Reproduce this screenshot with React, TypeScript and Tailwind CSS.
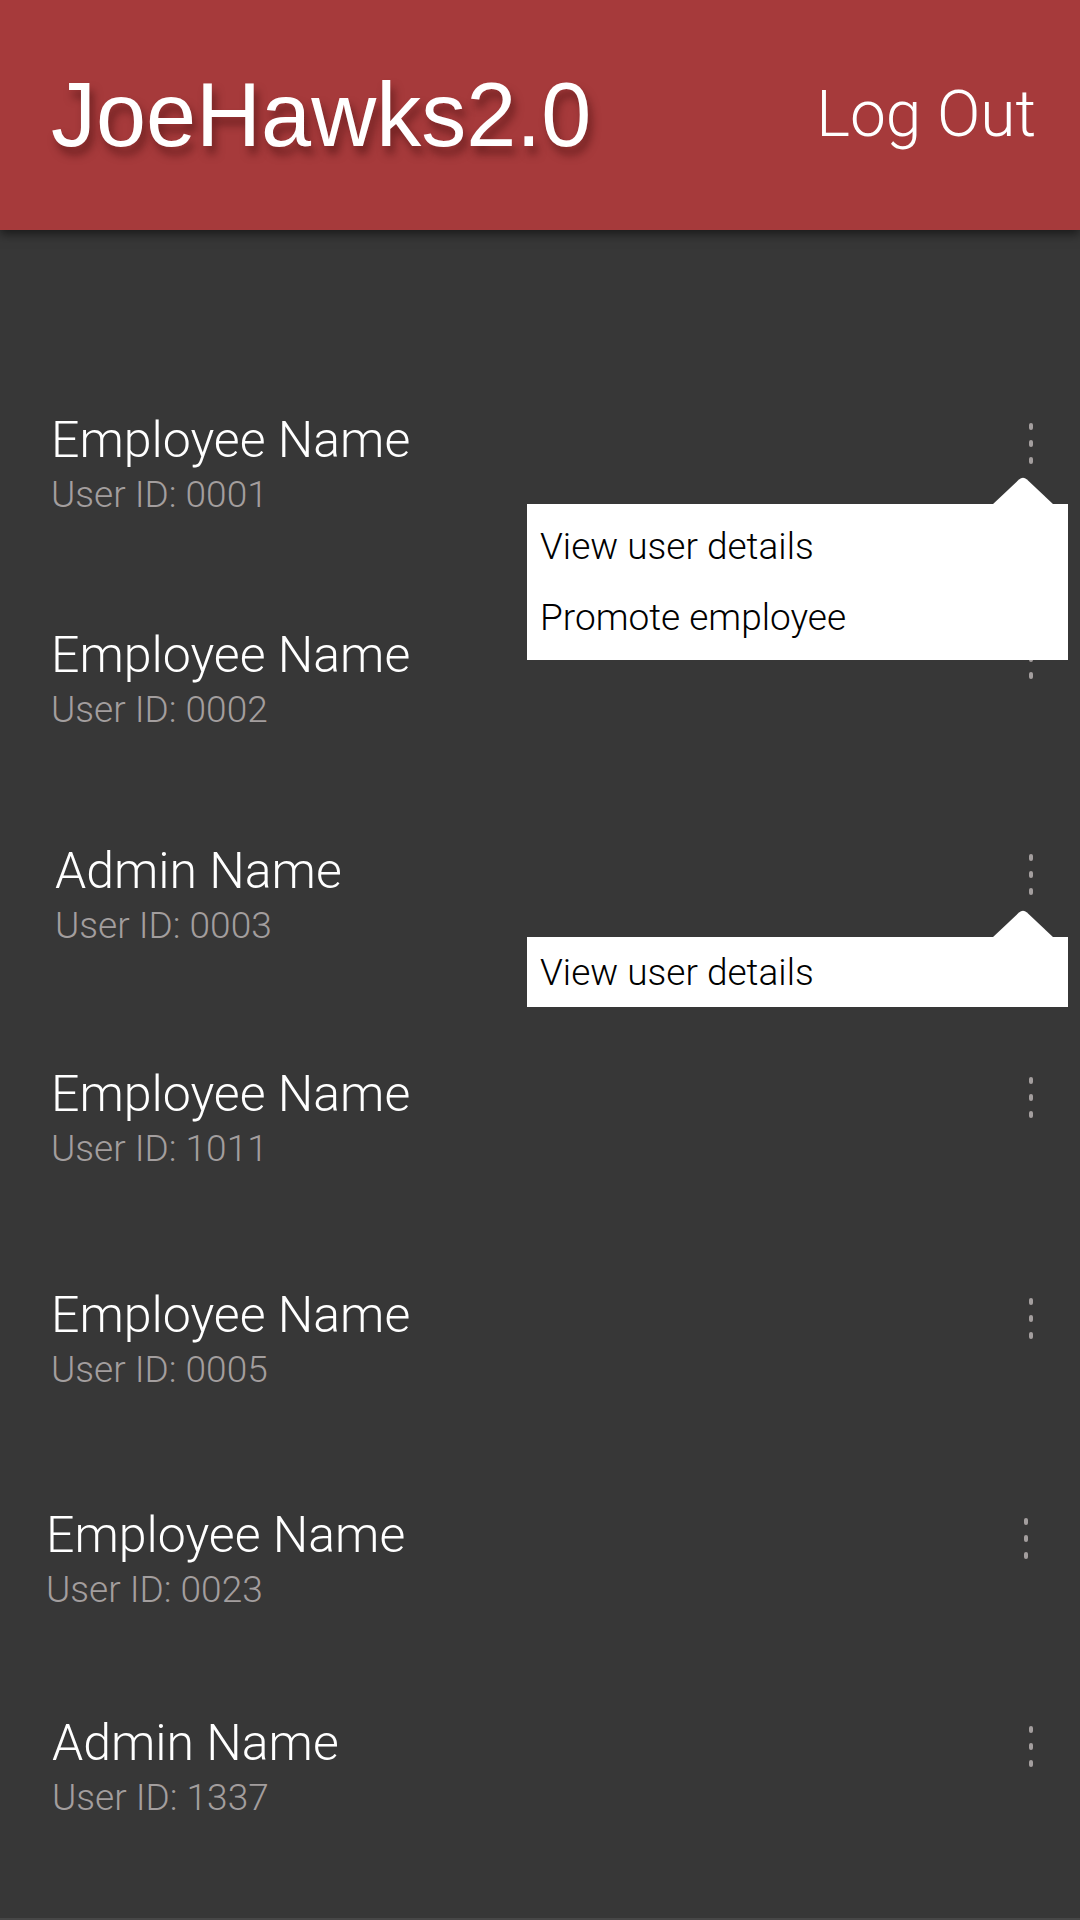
import React from "react";

type Item = { name: string; id: string; mt: number; ml: number; kr: number; menu?: string[]; menuTop?: number };

const items: Item[] = [
  { name: "Employee Name", id: "User ID: 0001", mt: 185, ml: 51, kr: 47, menu: ["View user details", "Promote employee"], menuTop: 62 },
  { name: "Employee Name", id: "User ID: 0002", mt: 117, ml: 51, kr: 47 },
  { name: "Admin Name", id: "User ID: 0003", mt: 118, ml: 55, kr: 47, menu: ["View user details"], menuTop: 64 },
  { name: "Employee Name", id: "User ID: 1011", mt: 125, ml: 51, kr: 47 },
  { name: "Employee Name", id: "User ID: 0005", mt: 123, ml: 51, kr: 47 },
  { name: "Employee Name", id: "User ID: 0023", mt: 122, ml: 46, kr: 52 },
  { name: "Admin Name", id: "User ID: 1337", mt: 110, ml: 52, kr: 47 },
];

function Kebab() {
  return (
    <div className="flex flex-col items-center gap-[10px] pt-[8px]">
      <span className="block w-[4px] h-[7px] rounded-full bg-[#a39e9e]" />
      <span className="block w-[4px] h-[7px] rounded-full bg-[#a39e9e]" />
      <span className="block w-[4px] h-[7px] rounded-full bg-[#a39e9e]" />
    </div>
  );
}

function Menu({ options, top }: { options: string[]; top: number }) {
  const single = options.length === 1;
  return (
    <div className="absolute right-[12px] w-[541px] z-10" style={{ top }}>
      <svg className="absolute right-[14px] top-[-27px]" width="62" height="28" viewBox="0 0 62 28">
        <path d="M0 28 L27 2.5 Q31 -1 35 2.5 L62 28 Z" fill="#ffffff" />
      </svg>
      <div className={`bg-white ${single ? "" : "py-[7px]"}`}>
        {options.map((o) => (
          <div
            key={o}
            className={`flex items-center pl-[13px] text-[37px] font-light text-black leading-none ${single ? "h-[70px]" : "h-[71px]"}`}
          >
            {o}
          </div>
        ))}
      </div>
    </div>
  );
}

export default function App() {
  return (
    <div
      className="relative w-[1080px] h-[1920px] bg-[#373737] overflow-hidden"
      style={{ fontFamily: "Roboto, 'Noto Sans', sans-serif" }}
    >
      <header className="relative z-20 h-[230px] bg-[#a63a3b] flex items-center justify-between pl-[51px] pr-[44px] shadow-[0_4px_10px_rgba(0,0,0,0.55)]">
        <div
          className="text-white text-[90px] leading-none [text-shadow:4px_8px_9px_rgba(60,10,10,0.5)]"
          style={{ fontFamily: "'Liberation Sans', Arial, sans-serif" }}
        >
          JoeHawks2.0
        </div>
        <div className="text-white text-[64px] font-light leading-none">Log Out</div>
      </header>

      <main className="flex flex-col">
        {items.map((it, i) => (
          <div key={i} className="relative flex items-start justify-between" style={{ marginTop: it.mt }}>
            <div className="flex flex-col gap-[11px]" style={{ marginLeft: it.ml }}>
              <div className="text-white text-[50px] font-light leading-none">{it.name}</div>
              <div className="text-[#a39e9e] text-[37px] font-light leading-none">{it.id}</div>
            </div>
            <div style={{ marginRight: it.kr }}>
              <Kebab />
            </div>
            {it.menu && <Menu options={it.menu} top={(it.menuTop ?? 0) + 27} />}
          </div>
        ))}
      </main>

      <div className="absolute bottom-0 left-0 right-0 h-[2px] bg-[#474747]" />
    </div>
  );
}
